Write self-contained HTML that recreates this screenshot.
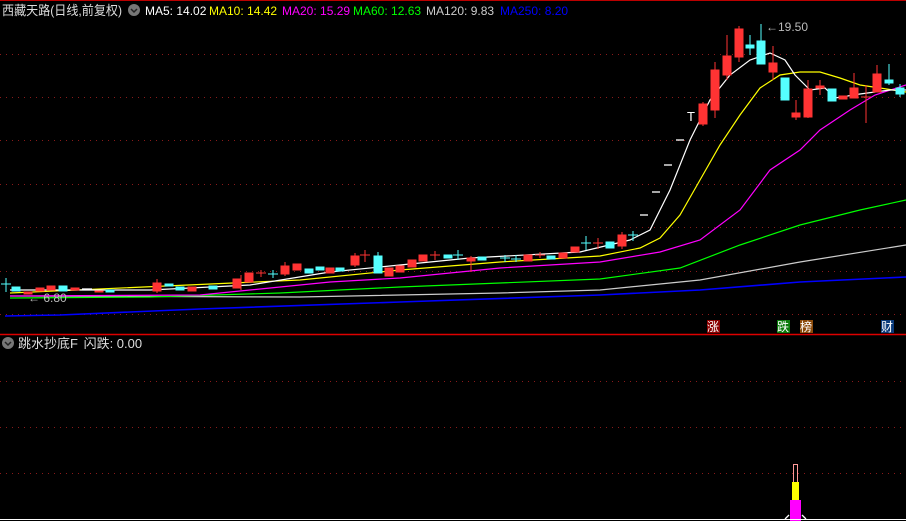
<!DOCTYPE html>
<html><head><meta charset="utf-8"><style>
body{margin:0;background:#000;width:906px;height:521px;overflow:hidden;font-family:"Liberation Sans","Noto Sans CJK SC",sans-serif;}
</style></head><body>
<svg width="906" height="521" xmlns="http://www.w3.org/2000/svg" style="position:absolute;left:0;top:0">
<rect width="906" height="521" fill="#000"/>
<line x1="0" y1="0.5" x2="906" y2="0.5" stroke="#b00" />
<g stroke="#8a1a1a" stroke-dasharray="1,5" stroke-width="1">
<line x1="0" y1="54.5" x2="906" y2="54.5"/><line x1="0" y1="97.5" x2="906" y2="97.5"/>
<line x1="0" y1="140.5" x2="906" y2="140.5"/><line x1="0" y1="184.5" x2="906" y2="184.5"/>
<line x1="0" y1="227.5" x2="906" y2="227.5"/><line x1="0" y1="271.5" x2="906" y2="271.5"/>
<line x1="0" y1="314.5" x2="906" y2="314.5"/>
<line x1="0" y1="381.5" x2="906" y2="381.5"/><line x1="0" y1="427.5" x2="906" y2="427.5"/>
<line x1="0" y1="473.5" x2="906" y2="473.5"/>
</g>
<line x1="0" y1="334.5" x2="906" y2="334.5" stroke="#d00" stroke-width="1.5"/>
<g fill="none" stroke-width="1.2">
<polyline stroke="#00f" stroke-width="1.6" points="5,316 60,315 200,309 400,302 600,295 700,290 800,282 906,277"/>
<polyline stroke="#ccc" points="10,296 300,297 500,293 600,290 700,280 800,262 906,245"/>
<polyline stroke="#0f0" points="10,298 150,297 280,293 400,287 500,283 600,279 680,268 740,245 800,225 860,210 906,200"/>
<polyline stroke="#f0f" points="10,296 200,295 330,282 400,278 500,268 600,262 660,252 700,240 740,210 770,170 800,150 820,130 850,110 875,95 906,85"/>
<polyline stroke="#ff0" points="10,293 300,280 400,270 500,262 600,256 640,248 660,238 680,215 700,180 720,145 740,115 760,88 780,75 800,72 820,72 840,78 860,85 880,88 906,92"/>
<polyline stroke="#fff" points="10,290 150,290 250,285 330,272 400,265 470,258 580,252 630,240 650,230 670,190 690,140 710,100 730,75 750,60 770,53 785,60 795,75 810,90 825,88 835,98 860,94 890,90 906,90"/>
</g>
<g stroke-width="1">
<g fill="#ff3333" stroke="#ff3333">
<rect x="24" y="292" width="8" height="2"/><rect x="36" y="288" width="8" height="3"/><rect x="47" y="286" width="8" height="4"/>
<rect x="71" y="288" width="8" height="2"/><rect x="95" y="291" width="8" height="1"/>
<rect x="153" y="283" width="8" height="8"/><rect x="188" y="287" width="8" height="4"/>
<rect x="233" y="279" width="8" height="9"/><rect x="245" y="273" width="8" height="9"/>
<rect x="281" y="266" width="8" height="8"/><rect x="293" y="264" width="8" height="6"/>
<rect x="326" y="268" width="8" height="5"/><rect x="351" y="256" width="8" height="9"/>
<rect x="385" y="268" width="8" height="8"/><rect x="396" y="266" width="8" height="6"/>
<rect x="408" y="260" width="8" height="7"/><rect x="419" y="255" width="8" height="6"/>
<rect x="467" y="258" width="8" height="3"/><rect x="524" y="255" width="8" height="6"/>
<rect x="559" y="253" width="8" height="5"/><rect x="571" y="247" width="8" height="5"/>
<rect x="618" y="235" width="8" height="11"/>
<rect x="699" y="104" width="8" height="20"/><rect x="711" y="70" width="8" height="40"/>
<rect x="723" y="56" width="8" height="19"/><rect x="735" y="29" width="8" height="28"/>
<rect x="769" y="63" width="8" height="9"/><rect x="792" y="113" width="8" height="4"/>
<rect x="804" y="89" width="8" height="28"/><rect x="816" y="86" width="8" height="2"/>
<rect x="839" y="96" width="8" height="3"/><rect x="850" y="88" width="8" height="10"/>
<rect x="873" y="74" width="8" height="18"/>
</g>
<g stroke="#ff3333">
<line x1="157" y1="279" x2="157" y2="293"/><line x1="241" y1="275" x2="241" y2="290"/><line x1="285" y1="262" x2="285" y2="276"/>
<line x1="355" y1="253" x2="355" y2="267"/><line x1="365" y1="250" x2="365" y2="262"/><line x1="360" y1="255" x2="370" y2="255"/>
<line x1="435" y1="251" x2="435" y2="260"/><line x1="430" y1="255" x2="440" y2="255"/>
<line x1="471" y1="256" x2="471" y2="272"/><line x1="261" y1="270" x2="261" y2="277"/><line x1="256" y1="273" x2="266" y2="273"/>
<line x1="540" y1="252" x2="540" y2="258"/><line x1="535" y1="255" x2="545" y2="255"/>
<line x1="598" y1="238" x2="598" y2="249"/><line x1="593" y1="243" x2="603" y2="243"/>
<line x1="622" y1="232" x2="622" y2="249"/>
<line x1="715" y1="62" x2="715" y2="118"/><line x1="727" y1="35" x2="727" y2="80"/><line x1="739" y1="26" x2="739" y2="62"/>
<line x1="773" y1="46" x2="773" y2="80"/><line x1="796" y1="100" x2="796" y2="120"/><line x1="808" y1="80" x2="808" y2="118"/>
<line x1="820" y1="80" x2="820" y2="95"/><line x1="854" y1="73" x2="854" y2="98"/>
<line x1="866" y1="85" x2="866" y2="123"/><line x1="861" y1="97" x2="871" y2="97"/><line x1="877" y1="65" x2="877" y2="92"/>
<line x1="703" y1="102" x2="703" y2="126"/>
</g>
<g fill="#55ffff" stroke="#55ffff">
<rect x="12" y="287" width="8" height="4"/><rect x="59" y="286" width="8" height="5"/><rect x="106" y="290" width="8" height="2"/>
<rect x="165" y="284" width="8" height="2"/><rect x="176" y="287" width="8" height="3"/><rect x="209" y="286" width="8" height="3"/>
<rect x="305" y="269" width="8" height="4"/><rect x="316" y="267" width="8" height="3"/><rect x="336" y="268" width="8" height="3"/>
<rect x="374" y="256" width="8" height="17"/><rect x="444" y="255" width="8" height="3"/><rect x="478" y="257" width="8" height="3"/>
<rect x="547" y="256" width="8" height="3"/><rect x="606" y="242" width="8" height="6"/>
<rect x="746" y="45" width="8" height="3"/><rect x="757" y="41" width="8" height="23"/><rect x="781" y="78" width="8" height="22"/>
<rect x="828" y="89" width="8" height="12"/><rect x="885" y="80" width="8" height="3"/><rect x="896" y="88" width="8" height="6"/>
</g>
<g stroke="#55ffff">
<line x1="6" y1="278" x2="6" y2="292"/><line x1="1" y1="284" x2="11" y2="284"/>
<line x1="273" y1="270" x2="273" y2="278"/><line x1="268" y1="274" x2="278" y2="274"/>
<line x1="378" y1="252" x2="378" y2="273"/><line x1="458" y1="250" x2="458" y2="260"/><line x1="453" y1="255" x2="463" y2="255"/>
<line x1="505" y1="255" x2="505" y2="262"/><line x1="500" y1="258" x2="510" y2="258"/>
<line x1="516" y1="255" x2="516" y2="262"/><line x1="511" y1="259" x2="521" y2="259"/>
<line x1="586" y1="236" x2="586" y2="250"/><line x1="581" y1="243" x2="591" y2="243"/>
<line x1="633" y1="231" x2="633" y2="241"/><line x1="628" y1="235" x2="638" y2="235"/>
<line x1="750" y1="35" x2="750" y2="55"/><line x1="761" y1="24" x2="761" y2="64"/><line x1="889" y1="64" x2="889" y2="85"/>
<line x1="900" y1="84" x2="900" y2="97"/>
</g>
<g stroke="#fff" stroke-width="1.3">
<line x1="640" y1="215" x2="648" y2="215"/><line x1="652" y1="192" x2="660" y2="192"/>
<line x1="664" y1="165" x2="672" y2="165"/><line x1="676" y1="140" x2="684" y2="140"/>
<line x1="82" y1="289" x2="92" y2="289"/>
</g>
</g>
<g font-family="Liberation Sans,Noto Sans CJK SC,sans-serif">
<text x="687" y="121" fill="#fff" font-size="13">T</text>
<text x="766" y="31" fill="#bbb" font-size="12">←19.50</text>
<text x="28" y="302" fill="#bbb" font-size="12">← 6.80</text>
<text x="2" y="15" fill="#ddd" font-size="13" textLength="120" lengthAdjust="spacingAndGlyphs">西藏天路(日线,前复权)</text>
<circle cx="134" cy="10" r="6" fill="#777"/><path d="M131 9 l3 3 l3 -3" stroke="#222" fill="none" stroke-width="1.5"/>
<g font-size="12">
<text x="145" y="15" fill="#fff">MA5: 14.02</text>
<text x="209" y="15" fill="#ff0">MA10: 14.42</text>
<text x="282" y="15" fill="#f0f">MA20: 15.29</text>
<text x="353" y="15" fill="#0f0">MA60: 12.63</text>
<text x="426" y="15" fill="#ccc">MA120: 9.83</text>
<text x="500" y="15" fill="#00f">MA250: 8.20</text>
</g>
<circle cx="8" cy="343" r="6" fill="#777"/><path d="M5 342 l3 3 l3 -3" stroke="#222" fill="none" stroke-width="1.5"/>
<text x="18" y="348" fill="#ddd" font-size="13">跳水抄底F <tspan dx="2">闪跌: 0.00</tspan></text>
<rect x="707" y="320" width="13" height="13" fill="#8b0000"/><text x="707" y="331" fill="#fff" font-size="12">涨</text>
<rect x="777" y="320" width="13" height="13" fill="#0a7a0a"/><text x="777" y="331" fill="#fff" font-size="12">跌</text>
<rect x="800" y="320" width="13" height="13" fill="#8b4a0a"/><text x="800" y="331" fill="#fff" font-size="12">榜</text>
<rect x="881" y="320" width="13" height="13" fill="#0a3a7a"/><text x="881" y="331" fill="#fff" font-size="12">财</text>
</g>
<rect x="793.5" y="464.5" width="4" height="18" fill="none" stroke="#f99"/>
<rect x="792" y="482" width="7" height="18" fill="#ff0"/>
<rect x="790" y="500" width="11" height="21" fill="#f0f"/>
<line x1="0" y1="519.5" x2="906" y2="519.5" stroke="#fff"/>
<path d="M785 519 l4 -4 M802 515 l4 4" stroke="#fff" stroke-width="1.3"/>
</svg>
</body></html>
